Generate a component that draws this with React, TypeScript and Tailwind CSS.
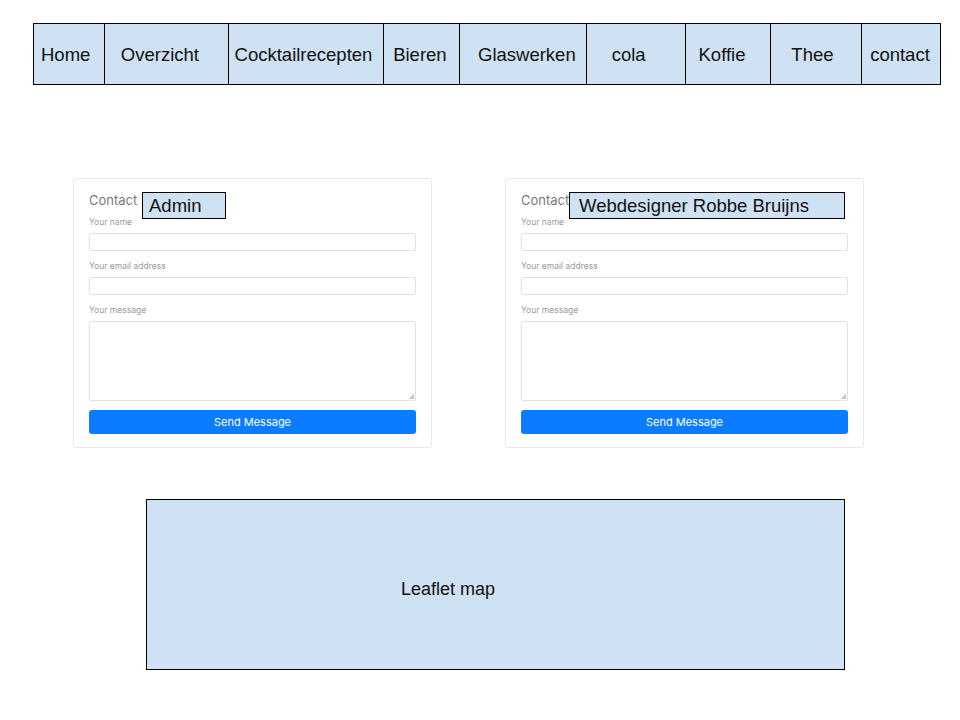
import React from "react";

const navItems = [
  { label: "Home", w: "w-[71px]", pl: "pl-[7px]" },
  { label: "Overzicht", w: "w-[124px]", pl: "pl-[16px]" },
  { label: "Cocktailrecepten", w: "w-[156px]", pl: "pl-[6px]" },
  { label: "Bieren", w: "w-[76px]", pl: "pl-[9px]" },
  { label: "Glaswerken", w: "w-[127px]", pl: "pl-[18px]" },
  { label: "cola", w: "w-[99px]", pl: "pl-[25px]" },
  { label: "Koffie", w: "w-[86px]", pl: "pl-[13px]" },
  { label: "Thee", w: "w-[91px]", pl: "pl-[20px]" },
  { label: "contact", w: "w-[78px]", pl: "pl-[8px]" },
];

const NavBar: React.FC = () => (
  <nav className="ml-[33px] mt-[23px] flex h-[62px] w-[908px] border border-black bg-[#cfe2f3] font-['Liberation_Sans',Arial,sans-serif] text-[18.5px] text-[#111]">
    {navItems.map((item, i) => (
      <div
        key={item.label}
        className={`flex items-center pt-[2px] ${item.w} ${item.pl} ${
          i < navItems.length - 1 ? "border-r border-black" : ""
        }`}
      >
        {item.label}
      </div>
    ))}
  </nav>
);

const Field: React.FC<{ label: string; tall?: boolean; first?: boolean }> = ({
  label,
  tall,
  first,
}) => (
  <>
    <div
      className={`${first ? "mt-[8px]" : "mt-[9px]"} h-[12px] text-[8.5px] leading-[12px] text-[#9a9a9a]`}
    >
      {label}
    </div>
    <div
      className={`mt-[5px] rounded-[2px] border border-[#e2e2e2] bg-white ${
        tall ? "relative h-[80px]" : "h-[18px]"
      }`}
    >
      {tall && (
        <div className="absolute bottom-[1px] right-[1px] h-[5px] w-[5px] bg-[linear-gradient(135deg,transparent_50%,#c8c8c8_50%)]" />
      )}
    </div>
  </>
);

const ContactCard: React.FC<{ who: string; tagPos: string }> = ({ who, tagPos }) => (
  <section className="relative h-[270px] w-[359px] rounded-[3px] border border-[#e8e8e8] bg-white px-[15px] pt-[13px] font-['Inter',sans-serif]">
    <h3 className="h-[16px] text-[13px] leading-[16px] text-[#7a7a7a]">Contact</h3>
    <Field label="Your name" first />
    <Field label="Your email address" />
    <Field label="Your message" tall />
    <button className="mt-[9px] h-[24px] w-full rounded-[3px] bg-[#0a7cff] text-[11px] text-white">
      Send Message
    </button>
    <div
      className={`absolute top-[13px] ${tagPos} flex h-[27px] items-center border border-black bg-[#cfe2f3] font-['Liberation_Sans',Arial,sans-serif] text-[18.5px] text-[#111]`}
    >
      {who}
    </div>
  </section>
);

const App: React.FC = () => (
  <div className="min-h-screen w-[960px] bg-white">
    <NavBar />
    <div className="mt-[93px] flex gap-[73px] pl-[73px]">
      <ContactCard who="Admin" tagPos="left-[68px] w-[84px] pl-[6px]" />
      <ContactCard who="Webdesigner Robbe Bruijns" tagPos="left-[63px] w-[276px] pl-[9px]" />
    </div>
    <div className="ml-[146px] mt-[51px] h-[171px] w-[699px] border border-black bg-[#cfe2f3] pl-[254px] pt-[79px] font-['Liberation_Sans',Arial,sans-serif] text-[18px] leading-[20px] text-[#111]">
      Leaflet map
    </div>
  </div>
);

export default App;
